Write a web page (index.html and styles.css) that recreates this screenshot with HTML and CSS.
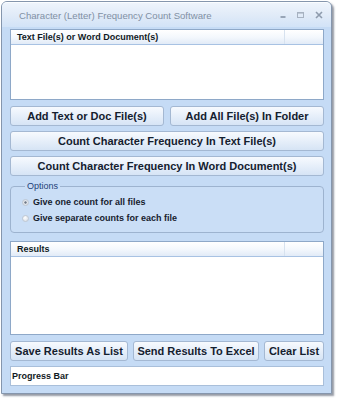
FILE: index.html
```html
<!DOCTYPE html>
<html>
<head>
<meta charset="utf-8">
<link rel="stylesheet" href="styles.css">
</head>
<body>
<div class="window">
  <div class="titlebar">
    <span class="title">Character (Letter) Frequency Count Software</span>
    <div class="controls">
      <svg class="ctl min" width="7" height="8" viewBox="0 0 7 8"><rect x="0.5" y="5" width="5" height="2" fill="#98a5b7"/></svg>
      <svg class="ctl max" width="8" height="8" viewBox="0 0 8 8"><rect x="0.5" y="1.5" width="6" height="5" fill="none" stroke="#a7b2c1" stroke-width="1"/><rect x="0.5" y="1" width="6" height="1.6" fill="#a7b2c1"/></svg>
      <svg class="ctl close" width="8" height="8" viewBox="0 0 8 8"><path d="M1 1 L7 7 M7 1 L1 7" stroke="#8e9bad" stroke-width="1.6" fill="none"/></svg>
    </div>
  </div>
  <div class="content">
    <div class="listbox files">
      <div class="lhead"><span class="col1">Text File(s) or Word Document(s)</span><span class="col2"></span></div>
      <div class="lbody"></div>
    </div>
    <div class="row two">
      <button class="btn half">Add Text or Doc File(s)</button>
      <button class="btn half">Add All File(s) In Folder</button>
    </div>
    <button class="btn wide">Count Character Frequency In Text File(s)</button>
    <button class="btn wide">Count Character Frequency In Word Document(s)</button>
    <fieldset class="options">
      <legend>Options</legend>
      <div class="radio"><span class="circle on"></span>Give one count for all files</div>
      <div class="radio"><span class="circle"></span>Give separate counts for each file</div>
    </fieldset>
    <div class="listbox results">
      <div class="lhead"><span class="col1">Results</span><span class="col2"></span></div>
      <div class="lbody"></div>
    </div>
    <div class="row three">
      <button class="btn save">Save Results As List</button>
      <button class="btn excel">Send Results To Excel</button>
      <button class="btn clear">Clear List</button>
    </div>
    <div class="progress">Progress Bar</div>
  </div>
</div>
</body>
</html>
```
FILE: styles.css
```css
html, body {
  margin: 0;
  padding: 0;
  background: #ffffff;
  width: 338px;
  height: 400px;
  overflow: hidden;
  font-family: "Liberation Sans", Arial, sans-serif;
}

.window {
  margin: 1px 0 0 1px;
  width: 331px;
  height: 393px;
  box-sizing: border-box;
  border: 1px solid #8596ad;
  border-radius: 6px 6px 0 0;
  background: #c5dbf5;
  box-shadow: 2px 2px 2px rgba(60, 70, 90, 0.55);
  display: flex;
  flex-direction: column;
}

.titlebar {
  height: 25px;
  flex: none;
  display: flex;
  align-items: center;
  border-radius: 5px 5px 0 0;
  background: linear-gradient(#eef4fc 0%, #e1ebf8 50%, #d2e3f7 100%);
  border-top: 1px solid #fbfdff;
  box-sizing: border-box;
}

.title {
  margin-left: 17px;
  font-size: 9.6px;
  color: #8190a4;
  flex: 1;
  padding-top: 1px;
}

.controls {
  display: flex;
  align-items: center;
  margin-right: 8px;
  gap: 0;
}

.ctl { display: block; }
.min { margin-right: 10px; }
.max { margin-right: 10px; }

.content {
  flex: 1;
  display: flex;
  flex-direction: column;
  padding: 2px 7px 0 8px;
}

.listbox {
  box-sizing: border-box;
  border: 1px solid #8ea8c8;
  background: #ffffff;
  display: flex;
  flex-direction: column;
}

.files { height: 71px; }
.results { height: 94px; margin-top: 8px; }

.lhead {
  height: 15px;
  flex: none;
  box-sizing: border-box;
  display: flex;
  background: linear-gradient(#ffffff 0%, #f4f8fd 50%, #e2ebf7 100%);
  border-bottom: 1px solid #a8c2e3;
  font-size: 9px;
  font-weight: bold;
  color: #111a24;
  line-height: 14px;
}

.col1 {
  flex: 1;
  padding-left: 6px;
  border-right: 1px solid #d7e2ef;
}

.col2 { width: 38px; }

.lbody { flex: 1; }

.row {
  display: flex;
}

.btn {
  box-sizing: border-box;
  height: 20px;
  margin: 0;
  padding: 0;
  border: 1px solid #a4b8d2;
  border-radius: 3px;
  background: linear-gradient(#f7fafe 0%, #e8f0fa 45%, #d6e4f5 100%);
  font-family: "Liberation Sans", Arial, sans-serif;
  font-size: 11px;
  font-weight: bold;
  color: #14202e;
  text-align: center;
  white-space: nowrap;
}

.two { margin-top: 6px; gap: 6px; }
.half { flex: 1; }

.wide { width: 100%; margin-top: 5px; display: block; }

.options {
  margin: 5px 0 0 0;
  padding: 3px 0 6px 11px;
  border: 1px solid #9db3cf;
  border-radius: 4px;
  background: #cadef6;
  min-width: 0;
}

.options legend {
  padding: 0 2px;
  margin-left: 3px;
  font-size: 9px;
  line-height: 10px;
  color: #1d3f78;
}

.radio {
  height: 16px;
  display: flex;
  align-items: center;
  font-size: 9px;
  font-weight: bold;
  color: #16212e;
}

.circle {
  width: 7px;
  height: 7px;
  box-sizing: border-box;
  border-radius: 50%;
  border: 1px solid #c0c8d2;
  background: radial-gradient(circle at 40% 35%, #ffffff 0%, #e4e8ee 60%, #cfd5dd 100%);
  margin-right: 4px;
  position: relative;
}

.circle.on {
  background: radial-gradient(circle, #6d7785 0%, #8c95a2 28%, #e6eaef 45%, #d3d9e1 100%);
}

.three { margin-top: 6px; gap: 5px; }
.save { width: 118px; }
.excel { width: 126px; }
.clear { width: 60px; }

.progress {
  margin-top: 5px;
  height: 20px;
  box-sizing: border-box;
  border: 1px solid #a9bfda;
  background: #ffffff;
  font-size: 9px;
  font-weight: bold;
  color: #111a24;
  padding-left: 1px;
  line-height: 18px;
}
```
